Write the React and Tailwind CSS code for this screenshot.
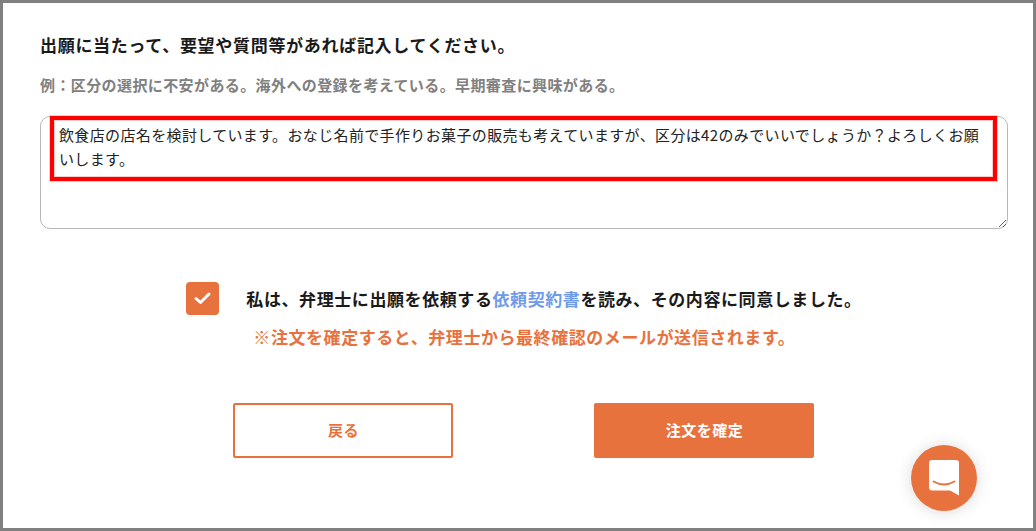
const font = { fontFamily: '"Noto Sans CJK JP", "Noto Sans", sans-serif' };

export default function App() {
  return (
    <div style={font} className="w-[1036px] h-[531px] bg-white border-[3px] border-[#808080] overflow-hidden relative">
      <div className="pl-[37px] pr-[25px] pt-[30px]">
        <h1 className="text-[17px] leading-[24px] font-bold tracking-[0.7px] text-[#1a1a1a]">出願に当たって、要望や質問等があれば記入してください。</h1>
        <p className="mt-[16px] text-[15px] leading-[24px] font-bold tracking-[0.4px] text-[#808080]">例：区分の選択に不安がある。海外への登録を考えている。早期審査に興味がある。</p>
        <div className="relative mt-[19px]">
          <textarea
            style={font}
            readOnly
            className="block w-full h-[113px] border border-[#b8b8b8] rounded-[10px] pl-[18px] pr-[18px] pt-[6px] text-[15px] leading-[24px] tracking-[0.36px] text-[#222] bg-white outline-none resize-y"
            defaultValue="飲食店の店名を検討しています。おなじ名前で手作りお菓子の販売も考えていますが、区分は42のみでいいでしょうか？よろしくお願いします。"
          />
          <div className="absolute left-[10px] top-0 w-[947px] h-[65px] border-[4px] border-[#ff0000] shadow-[0_0_0_1px_rgba(255,0,0,0.2),inset_0_0_0_1px_rgba(255,0,0,0.2)] pointer-events-none" />
        </div>
        <div className="flex justify-center mt-[53px]">
          <div className="flex items-start">
            <span className="w-[33px] h-[33px] rounded-[4px] bg-[#e8723e] flex items-center justify-center mr-[27px]">
              <svg width="19" height="15" viewBox="0 0 19 15" fill="none">
                <path d="M3 7.5 L7.5 11.5 L16 3" stroke="#fff" strokeWidth="3" strokeLinecap="round" strokeLinejoin="round" />
              </svg>
            </span>
            <div>
              <p className="text-[17px] leading-[24px] font-bold tracking-[0.58px] text-[#1a1a1a] mt-[5px] whitespace-nowrap">
                私は、弁理士に出願を依頼する<span className="text-[#6f9be8]">依頼契約書</span>を読み、その内容に同意しました。
              </p>
              <p className="text-[17px] leading-[24px] font-bold tracking-[0.56px] text-[#e8723e] mt-[14px] ml-[7px] whitespace-nowrap">
                ※注文を確定すると、弁理士から最終確認のメールが送信されます。
              </p>
            </div>
          </div>
        </div>
        <div className="flex justify-center gap-[141px] mt-[54px] pr-[2px]">
          <button className="w-[220px] h-[55px] pl-[2px] border-2 border-[#e8723e] rounded-[2px] bg-white text-[#e8723e] text-[15px] font-bold tracking-[0.45px]">戻る</button>
          <button className="w-[220px] h-[55px] pl-[2px] rounded-[2px] bg-[#e8723e] text-white text-[15px] font-bold tracking-[0.45px]">注文を確定</button>
        </div>
      </div>
      <div className="absolute left-[908px] top-[442px] w-[66px] h-[66px] rounded-full bg-[#e8723e] shadow-[0_1px_16px_rgba(0,0,0,0.15)] flex items-center justify-center">
        <svg width="30" height="36" viewBox="0 0 30 36">
          <path d="M3 0 H27 Q30 0 30 3 V35.5 L21 30.5 H3 Q0 30.5 0 27.5 V3 Q0 0 3 0 Z" fill="#fff" />
          <path d="M4.5 21.5 Q15 27.5 25.5 21.5" stroke="#e8723e" strokeWidth="1.8" fill="none" strokeLinecap="round" />
        </svg>
      </div>
    </div>
  );
}
